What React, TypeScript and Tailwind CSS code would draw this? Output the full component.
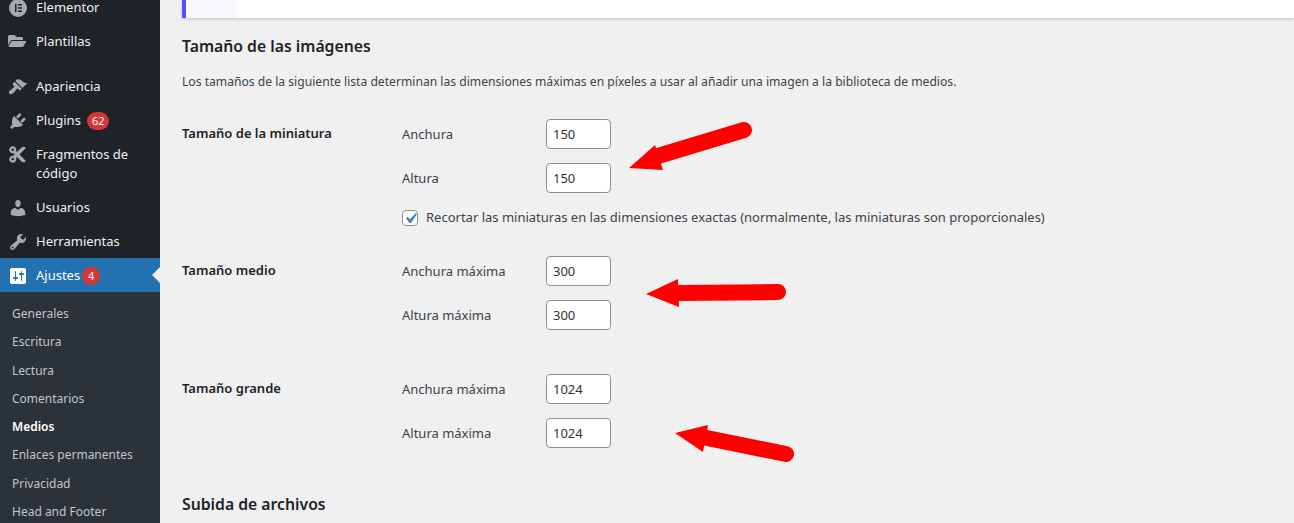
import type { ReactNode } from 'react'
import { FaCut, FaFolderOpen } from 'react-icons/fa'

const Dash = ({ d, className = 'text-[#a7aaad]' }: { d: string; className?: string }) => (
  <svg viewBox="0 0 20 20" className={`h-5 w-5 fill-current ${className}`}>
    <path d={d} />
  </svg>
)

const paths = {
  brush:
    'M14.48 11.06L7.41 3.99l1.5-1.5c.5-.56 2.3-.47 3.51.32 1.21.8 1.43 1.28 2.91 2.1 1.18.64 2.45 1.26 4.45.85zm-.71.71L6.7 4.7 4.93 6.47c-.39.39-.39 1.02 0 1.41l1.06 1.06c.39.39.39 1.03 0 1.42-.6.6-1.43 1.11-2.21 1.69-.35.26-.7.53-1.01.84C1.43 13.23 0 15 1.53 16.53c1.52 1.52 3.3.09 4.63-1.25.31-.31.58-.66.84-1.01.58-.78 1.09-1.61 1.69-2.21.39-.39 1.02-.39 1.41 0l1.06 1.06c.39.39 1.02.39 1.41 0z',
  plug:
    'M13.11 4.36L9.87 7.6 8 5.73l3.24-3.24c.35-.34 1.05-.2 1.56.32.52.51.66 1.21.31 1.55zm-8 1.77l.91-1.12 9.01 9.01-1.19.84c-.71.71-2.63 1.16-3.82 1.16H6.14L4.9 17.26c-.59.59-1.54.59-2.12 0-.59-.58-.59-1.53 0-2.12l1.24-1.24v-3.88c0-1.13.4-3.19 1.09-3.89zm7.26 3.97l3.24-3.24c.34-.35 1.04-.21 1.55.31.52.51.66 1.21.31 1.55l-3.24 3.25z',
  user:
    'M10 9.25c-2.27 0-2.73-3.44-2.73-3.44C7 4.02 7.82 2 9.97 2c2.16 0 2.98 2.02 2.71 3.81 0 0-.41 3.44-2.68 3.44zm0 2.57L12.72 10c2.39 0 4.52 2.33 4.52 4.53v2.49s-3.65 1.13-7.24 1.13c-3.65 0-7.24-1.13-7.24-1.13v-2.49c0-2.25 1.94-4.48 4.47-4.48z',
  wrench:
    'M16.68 9.77c-1.34 1.34-3.3 1.67-4.95.99l-5.41 6.52c-.99.99-2.59.99-3.58 0s-.99-2.59 0-3.57l6.52-5.42c-.68-1.65-.35-3.61.99-4.95 1.28-1.28 3.12-1.62 4.72-1.06l-2.89 2.89 2.82 2.82 2.86-2.87c.53 1.58.18 3.39-1.08 4.65zM3.81 16.21c.4.39 1.04.39 1.43 0 .4-.4.4-1.04 0-1.43-.39-.4-1.03-.4-1.43 0-.39.39-.39 1.03 0 1.43z',
  settings:
    'M18 16V4c0-1.1-.9-2-2-2H4c-1.1 0-2 .9-2 2v12c0 1.1.9 2 2 2h12c1.1 0 2-.9 2-2zM8 11h1c.55 0 1 .45 1 1s-.45 1-1 1H8v1.5c0 .28-.22.5-.5.5s-.5-.22-.5-.5V13H6c-.55 0-1-.45-1-1s.45-1 1-1h1V5.5c0-.28.22-.5.5-.5s.5.22.5.5V11zm5-2h-1c-.55 0-1-.45-1-1s.45-1 1-1h1V5.5c0-.28.22-.5.5-.5s.5.22.5.5V7h1c.55 0 1 .45 1 1s-.45 1-1 1h-1v5.5c0 .28-.22.5-.5.5s-.5-.22-.5-.5V9z',
}

const ElementorIcon = () => (
  <svg viewBox="0 0 20 20" className="h-5 w-5">
    <path
      fillRule="evenodd"
      fill="#a7aaad"
      d="M10 1a9 9 0 1 0 0 18 9 9 0 0 0 0-18zM7 6h1.500v8H7zm3 0h4v1.500h-4zm0 3.250h4v1.500h-4zm0 3.250h4V14h-4z"
    />
  </svg>
)

const Badge = ({ children, className = '' }: { children: ReactNode; className?: string }) => (
  <span className={`flex h-[18px] min-w-[18px] items-center justify-center rounded-full bg-[#d63638] px-[5px] text-[11px] leading-none text-white ${className}`}>
    {children}
  </span>
)

const MenuItem = ({ icon, children, badge, className = 'pb-[6px]' }: { icon: ReactNode; children: ReactNode; badge?: ReactNode; className?: string }) => (
  <div className={`flex min-h-[34px] items-start pl-[8px] pt-[8px] text-[#f0f0f1] ${className}`}>
    <div className="flex w-[28px] shrink-0 items-center">{icon}</div>
    <div className="flex items-center gap-[6px] leading-[19px]">
      <span>{children}</span>
      {badge}
    </div>
  </div>
)

const subItems = ['Generales', 'Escritura', 'Lectura', 'Comentarios', 'Medios', 'Enlaces permanentes', 'Privacidad', 'Head and Footer']

const Sidebar = () => (
  <aside className="-mt-[10px] w-[160px] shrink-0 bg-[#1d2327] text-[13px]">
    <MenuItem icon={<ElementorIcon />}>Elementor</MenuItem>
    <MenuItem icon={<FaFolderOpen className="h-[18px] w-[18px] text-[#a7aaad]" />}>Plantillas</MenuItem>
    <div className="h-[11px]" />
    <MenuItem icon={<Dash d={paths.brush} />}>Apariencia</MenuItem>
    <MenuItem icon={<Dash d={paths.plug} />} badge={<Badge>62</Badge>}>Plugins</MenuItem>
    <MenuItem icon={<FaCut className="h-[19px] w-[19px] text-[#a7aaad]" />} className="pb-[7px]">
      Fragmentos de
      <br />
      código
    </MenuItem>
    <MenuItem icon={<Dash d={paths.user} />}>Usuarios</MenuItem>
    <MenuItem icon={<Dash d={paths.wrench} />}>Herramientas</MenuItem>
    <div className="relative flex h-[34px] items-center bg-[#2271b1] pl-[8px] pt-[1px] text-white">
      <div className="flex w-[28px] items-center">
        <Dash d={paths.settings} className="text-white" />
      </div>
      <span>Ajustes</span>
      <Badge className="ml-[2px]">4</Badge>
      <span className="absolute right-0 top-[9px] h-0 w-0 border-y-[8px] border-r-[8px] border-y-transparent border-r-[#f0f0f0]" />
    </div>
    <ul className="bg-[#2c3338] pb-[10px] pt-[8px] text-[12px]">
      {subItems.map((s) => (
        <li
          key={s}
          className={`flex h-[28.28px] items-center pl-[12px] ${s === 'Medios' ? 'font-semibold text-white' : 'text-[#c3c4c7]'}`}
        >
          {s}
        </li>
      ))}
    </ul>
  </aside>
)

const NumberField = ({ label, value }: { label: string; value: string }) => (
  <div className="flex h-[30px] items-center">
    <span className="w-[144px] pt-[1px]">{label}</span>
    <input
      readOnly
      value={value}
      className="h-[30px] w-[65px] rounded-[4px] border border-[#8c8f94] bg-white px-[6px] text-[#2c3338] outline-none"
    />
  </div>
)

const SizeGroup = ({ title, children, className = '' }: { title: string; children: ReactNode; className?: string }) => (
  <div className={`flex ${className}`}>
    <div className="w-[220px] shrink-0 pt-[5px] font-semibold leading-[18px] text-[#1d2327]">{title}</div>
    <div className="flex flex-col gap-[14px]">{children}</div>
  </div>
)

export default function App() {
  return (
    <div
      className="relative flex h-[523px] w-[1294px] overflow-hidden bg-[#f0f0f0] text-[13px] text-[#3c434a]"
      style={{ fontFamily: '"Noto Sans", "Open Sans", sans-serif' }}
    >
      <Sidebar />

      <main className="min-w-0 flex-1 pl-[22px]">
        <div className="flex h-[18px] border-l-[4px] border-[#5b4dff] bg-white shadow-[0_1px_3px_rgba(0,0,0,0.2)]">
          <div className="w-[50px] bg-[#f8f8ff]" />
        </div>

        <h2 className="mt-[17px] text-[15.75px] font-semibold leading-[22px] text-[#1d2327]">Tamaño de las imágenes</h2>
        <p className="mt-[16px] text-[12.14px] leading-[18px]">
          Los tamaños de la siguiente lista determinan las dimensiones máximas en píxeles a usar al añadir una imagen a la biblioteca de medios.
        </p>

        <SizeGroup title="Tamaño de la miniatura" className="mt-[28px]">
          <NumberField label="Anchura" value="150" />
          <NumberField label="Altura" value="150" />
          <label className="mt-[2px] flex h-[18px] items-center gap-[8px]">
            <span className="flex h-4 w-4 items-center justify-center rounded-[4px] border border-[#8c8f94] bg-white">
              <svg viewBox="0 0 20 20" className="h-[21px] w-[21px] shrink-0 fill-[#3582c4]">
                <path d="M14.83 4.89l1.34.94-5.81 8.38H9.02L5.78 9.67l1.34-1.25 2.57 2.4z" />
              </svg>
            </span>
            Recortar las miniaturas en las dimensiones exactas (normalmente, las miniaturas son proporcionales)
          </label>
        </SizeGroup>

        <SizeGroup title="Tamaño medio" className="mt-[29px]">
          <NumberField label="Anchura máxima" value="300" />
          <NumberField label="Altura máxima" value="300" />
        </SizeGroup>

        <SizeGroup title="Tamaño grande" className="mt-[44px]">
          <NumberField label="Anchura máxima" value="1024" />
          <NumberField label="Altura máxima" value="1024" />
        </SizeGroup>

        <h2 className="mt-[45px] text-[15.75px] font-semibold leading-[22px] text-[#1d2327]">Subida de archivos</h2>
      </main>

      {/* hand drawn annotation arrows */}
      <svg className="pointer-events-none absolute inset-0" width="1294" height="523" viewBox="0 0 1294 523" fill="#ff0000" stroke="none">
        <line x1="744" y1="130" x2="658" y2="156" stroke="#ff0000" strokeWidth="16" strokeLinecap="round" />
        <polygon points="629,168 655,145 663,170" />
        <line x1="778" y1="292" x2="678" y2="293" stroke="#ff0000" strokeWidth="16" strokeLinecap="round" />
        <polygon points="646,294 678,279 679,307" />
        <line x1="786" y1="454" x2="707" y2="438" stroke="#ff0000" strokeWidth="16" strokeLinecap="round" />
        <polygon points="675,433 708,425 703,452" />
      </svg>
    </div>
  )
}
